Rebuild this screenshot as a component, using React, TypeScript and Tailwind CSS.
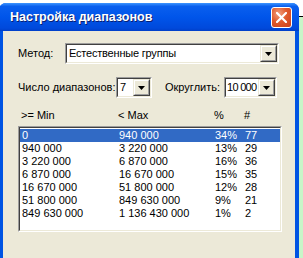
import React from 'react';

const rows = [
  ['0', '940 000', '34%', '77'],
  ['940 000', '3 220 000', '13%', '29'],
  ['3 220 000', '6 870 000', '16%', '36'],
  ['6 870 000', '16 670 000', '15%', '35'],
  ['16 670 000', '51 800 000', '12%', '28'],
  ['51 800 000', '849 630 000', '9%', '21'],
  ['849 630 000', '1 136 430 000', '1%', '2'],
];

function DropButton() {
  return (
    <div className="h-full w-[17px] shrink-0 border-t border-l border-t-[#ECE9D8] border-l-[#ECE9D8] border-b border-r border-b-[#404040] border-r-[#404040]">
      <div className="flex h-full w-full items-center justify-center border-t border-l border-t-white border-l-white border-b border-r border-b-[#9d9d9d] border-r-[#9d9d9d] bg-[#ECE9D8]">
        <svg width="7" height="4" viewBox="0 0 7 4">
          <path d="M0 0h7L3.5 4z" fill="#000" />
        </svg>
      </div>
    </div>
  );
}

function Combo({ value, width, tight }: { value: string; width: string; tight?: boolean }) {
  return (
    <div
      className={`h-[21px] ${width} border-t border-l border-t-[#9d9d9d] border-l-[#9d9d9d] border-b border-r border-b-white border-r-white`}
    >
      <div className="flex h-full items-center border-t border-l border-t-[#404040] border-l-[#404040] border-b border-r border-b-[#ECE9D8] border-r-[#ECE9D8] bg-white">
        <span
          className={`min-w-0 flex-1 whitespace-nowrap leading-none ${
            tight ? 'pl-[1px] tracking-[-0.7px]' : 'pl-[2px] tracking-[-0.2px]'
          }`}
        >
          {value}
        </span>
        <DropButton />
      </div>
    </div>
  );
}

export default function App() {
  return (
    <div
      className="flex h-[258px] w-[303px] overflow-hidden bg-white text-[11px] text-black"
      style={{ fontFamily: '"Liberation Sans", Arial, sans-serif' }}
    >
      {/* dialog window */}
      <div className="mt-[3px] ml-[-1px] flex w-[300px] flex-col rounded-t-[7px] bg-[#0054E3]">
        {/* title bar */}
        <div className="flex h-[28px] items-center justify-between rounded-t-[7px] bg-[linear-gradient(#3d95ff_0%,#0a5fee_12%,#0055ea_50%,#0049db_90%,#003fc8_100%)] pl-[11px] pr-[7px]">
          <span className="text-[12.5px] font-bold text-white [text-shadow:1px_1px_0_#0a1f70]">
            Настройка диапазонов
          </span>
          <div className="flex h-[21px] w-[21px] items-center justify-center rounded-[3px] border border-white bg-[radial-gradient(circle_at_35%_30%,#f0a080_0%,#e05a2c_45%,#c8401a_100%)]">
            <svg width="11" height="11" viewBox="0 0 11 11">
              <path d="M1 1L10 10M10 1L1 10" stroke="#fff" strokeWidth="2.2" strokeLinecap="square" />
            </svg>
          </div>
        </div>

        {/* client area */}
        <div className="mx-[4px] flex-1 bg-[#ECE9D8] pl-[15px] pt-[12px]">
          <div className="flex items-center">
            <span className="w-[47px]">Метод:</span>
            <Combo value="Естественные группы" width="w-[214px]" />
          </div>

          <div className="mt-[13px] flex items-center">
            <span className="w-[98px] whitespace-nowrap">Число диапазонов:</span>
            <Combo value="7" width="w-[36px]" />
            <span className="ml-[13px] w-[59px] whitespace-nowrap">Округлить:</span>
            <Combo value="10 000" width="w-[53px]" tight />
          </div>

          <div className="mt-[9px] grid grid-cols-[97px_96px_30px_1fr] pl-[3px]">
            <span>&gt;= Min</span>
            <span>&lt; Max</span>
            <span>%</span>
            <span>#</span>
          </div>

          <div className="mt-[2px] h-[106px] w-[264px] border-t border-l border-t-[#9d9d9d] border-l-[#9d9d9d] border-b border-r border-b-white border-r-white">
            <div className="h-full border-t border-l border-t-[#404040] border-l-[#404040] border-b border-r border-b-[#ECE9D8] border-r-[#ECE9D8] bg-white pt-[1px]">
              {rows.map((r, i) => (
                <div
                  key={i}
                  className={`grid h-[13px] grid-cols-[97px_96px_30px_1fr] items-center pl-[2px] leading-none ${
                    i === 0 ? 'bg-[#316AC5] text-white' : ''
                  }`}
                >
                  <span>{r[0]}</span>
                  <span>{r[1]}</span>
                  <span>{r[2]}</span>
                  <span>{r[3]}</span>
                </div>
              ))}
            </div>
          </div>
        </div>
      </div>

      {/* background map strip */}
      <div className="mt-[16px] flex-1 border-t border-black bg-[#c8f5c8]" />
    </div>
  );
}
